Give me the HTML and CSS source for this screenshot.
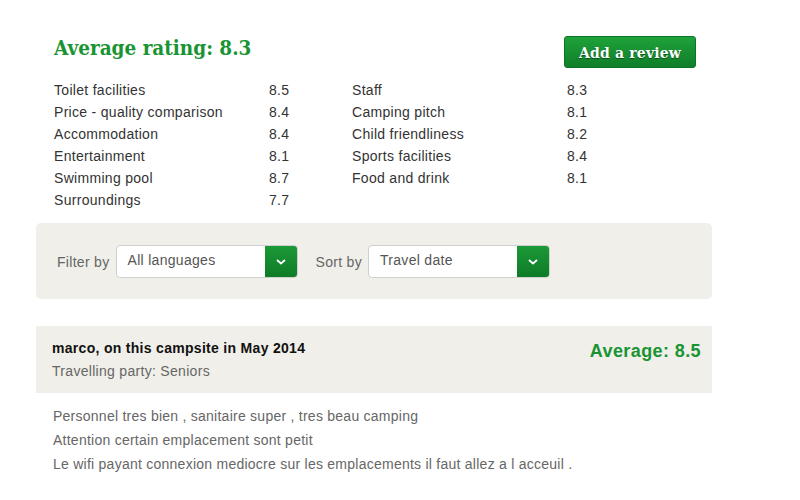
FILE: index.html
```html
<!DOCTYPE html>
<html lang="en">

<head>
    <meta charset="UTF-8">
    <title>Reviews</title>
    <link rel="stylesheet" href="styles.css">
</head>

<body>
    <main id="reviews">
        <div class="rating-head">
            <h2>Average rating: 8.3</h2>
            <a href="#" class="btn-review">Add a review</a>
        </div>

        <div class="scores">
            <ul class="score-col">
                <li><span>Toilet facilities</span><span>8.5</span></li>
                <li><span>Price - quality comparison</span><span>8.4</span></li>
                <li><span>Accommodation</span><span>8.4</span></li>
                <li><span>Entertainment</span><span>8.1</span></li>
                <li><span>Swimming pool</span><span>8.7</span></li>
                <li><span>Surroundings</span><span>7.7</span></li>
            </ul>
            <ul class="score-col">
                <li><span>Staff</span><span>8.3</span></li>
                <li><span>Camping pitch</span><span>8.1</span></li>
                <li><span>Child friendliness</span><span>8.2</span></li>
                <li><span>Sports facilities</span><span>8.4</span></li>
                <li><span>Food and drink</span><span>8.1</span></li>
            </ul>
        </div>

        <div class="filters">
            <label class="filter">
                Filter by
                <span class="select">
                    <span class="select-value">All languages</span>
                    <span class="select-arrow">
                        <svg width="10" height="6" viewBox="0 0 10 6"><path d="M1 1l4 3.5L9 1" fill="none" stroke="#fff" stroke-width="1.8"/></svg>
                    </span>
                </span>
            </label>
            <label class="filter">
                Sort by
                <span class="select">
                    <span class="select-value">Travel date</span>
                    <span class="select-arrow">
                        <svg width="10" height="6" viewBox="0 0 10 6"><path d="M1 1l4 3.5L9 1" fill="none" stroke="#fff" stroke-width="1.8"/></svg>
                    </span>
                </span>
            </label>
        </div>

        <div class="review">
            <div class="review-head">
                <div>
                    <h3>marco, on this campsite in May 2014</h3>
                    <p class="party">Travelling party: Seniors</p>
                </div>
                <div class="review-score">Average: 8.5</div>
            </div>
            <div class="review-body">
                <p>Personnel tres bien , sanitaire super , tres beau camping</p>
                <p>Attention certain emplacement sont petit</p>
                <p>Le wifi payant connexion mediocre sur les emplacements il faut allez a l acceuil .</p>
            </div>
        </div>
    </main>
</body>

</html>
```

FILE: styles.css
```css
body {
    margin: 0;
    font-family: "Liberation Sans", Arial, sans-serif;
    font-size: 14px;
    letter-spacing: 0.3px;
    color: #333;
    background: #fff;
}
#reviews {
    width: 676px;
    margin-left: 36px;
    padding-top: 34px;
}
.rating-head {
    display: flex;
    justify-content: space-between;
    align-items: flex-start;
    padding: 0 16px 0 18px;
}
.rating-head h2 {
    margin: 0;
    font-family: "DejaVu Serif", serif;
    font-stretch: semi-condensed;
    font-size: 20.5px;
    line-height: 28px;
    color: #1a9433;
    letter-spacing: 0;
}
.btn-review {
    display: block;
    margin-top: 2px;
    width: 132px;
    height: 32px;
    line-height: 31px;
    text-align: center;
    font-family: "DejaVu Serif", serif;
    font-stretch: semi-condensed;
    font-weight: bold;
    font-size: 15.5px;
    letter-spacing: 0.2px;
    color: #fff;
    text-decoration: none;
    text-shadow: 0 1px 1px rgba(0, 0, 0, 0.45);
    background: linear-gradient(#1ea23a, #0f7e29);
    border: 1px solid #0d7326;
    border-radius: 3px;
    box-sizing: border-box;
}
.scores {
    display: flex;
    padding: 11px 18px 0;
}
.score-col {
    list-style: none;
    margin: 0;
    padding: 0;
    width: 298px;
}
.score-col li {
    display: flex;
    line-height: 22px;
}
.score-col li span:first-child {
    width: 215px;
}
.filters {
    display: flex;
    align-items: center;
    gap: 18px;
    margin-top: 12px;
    padding: 22px 21px 21px;
    background: #f0efe9;
    border-radius: 5px;
}
.filter {
    display: flex;
    align-items: center;
    gap: 6px;
    color: #666;
}
.select {
    display: flex;
    width: 182px;
    height: 33px;
    background: #fff;
    border: 1px solid #cfcfcf;
    border-radius: 4px;
    box-sizing: border-box;
    overflow: hidden;
}
.select-value {
    flex: 1;
    padding-left: 11px;
    line-height: 28px;
    color: #555;
}
.select-arrow {
    width: 33px;
    display: flex;
    align-items: center;
    justify-content: center;
    background: linear-gradient(#1c9a37, #0e7a27);
    margin: -1px -1px -1px 0;
    border-radius: 0 4px 4px 0;
}
.review {
    margin-top: 27px;
}
.review-head {
    display: flex;
    justify-content: space-between;
    align-items: flex-start;
    background: #f0efe9;
    padding: 13px 11px 13px 16px;
}
.review-head h3 {
    margin: 0;
    font-size: 14px;
    line-height: 18px;
    color: #111;
}
.party {
    margin: 5px 0 0;
    line-height: 18px;
    color: #666;
}
.review-score {
    margin-top: 2px;
    font-size: 18px;
    letter-spacing: 0.4px;
    font-weight: bold;
    color: #1a9433;
}
.review-body {
    padding: 11px 17px;
    color: #666;
    letter-spacing: 0.25px;
}
.review-body p {
    margin: 0;
    line-height: 24px;
}
```
